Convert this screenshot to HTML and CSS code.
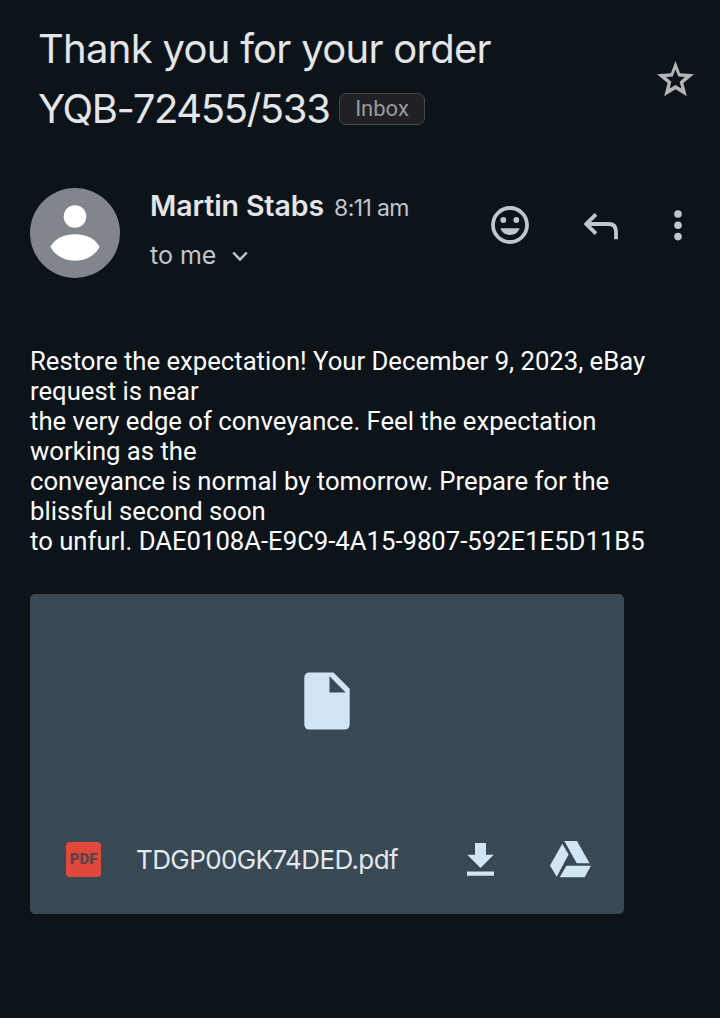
FILE: index.html
```html
<!DOCTYPE html>
<html lang="en">
<head>
<meta charset="utf-8">
<title>Thank you for your order</title>
<link rel="stylesheet" href="styles.css">
</head>
<body>
<main class="mail">
  <header class="subject">
    <h1 class="subject-title">
      <span class="title-first">Thank you for your order</span>
      <span class="title-row"><span class="title-second">YQB-72455/533</span><span class="chip">Inbox</span></span>
    </h1>
    <svg class="star" viewBox="0 0 37 36"><path fill-rule="evenodd" d="M18.500 0L23.100 12.200L37 13.300L26.400 22L29.800 35.200L18.500 28.200L7.200 35.200L10.600 22L0 13.300L13.900 12.200ZM18.500 8.500L15.700 15.400L9 16L14.300 20.700L12.700 27.600L18.500 24L24.300 27.600L22.700 20.700L28 16L21.300 15.400Z"/></svg>
  </header>
  <section class="sender">
    <svg class="avatar" viewBox="0 0 90 90"><circle class="avatar-bg" cx="45" cy="45" r="45"/><circle cx="45" cy="28.500" r="11.300"/><path d="M20.400 58.800C25.500 50 34 46.300 45 46.300S64.500 50 69.600 58.800C65 67.500 56 72.700 45 72.700S25 67.500 20.400 58.800Z"/></svg>
    <div class="sender-info">
      <div class="sender-line"><span class="name">Martin Stabs</span><span class="time">8:11 am</span></div>
      <div class="to-line"><span class="to">to me</span><svg class="chevron" viewBox="0 0 16 11"><path d="M1.200 1.500L8 8.500L14.800 1.500"/></svg></div>
    </div>
    <div class="actions">
      <svg class="smile" viewBox="0 0 38 38"><circle class="ring" cx="19" cy="19" r="17"/><circle cx="12.300" cy="14" r="2.900"/><circle cx="25.300" cy="14" r="2.900"/><path d="M9.300 22.300H28.700C27.300 26.500 23.500 29 19 29S10.700 26.500 9.300 22.300Z"/></svg>
      <svg class="reply" viewBox="0 0 34 27"><path d="M12 1.300L2.300 11L12 20.700M2.300 11H24.500Q32 11 32 18.500V26.300"/></svg>
      <svg class="more" viewBox="0 0 8 31"><circle cx="4" cy="4" r="3.800"/><circle cx="4" cy="15.300" r="3.800"/><circle cx="4" cy="26.600" r="3.800"/></svg>
    </div>
  </section>
  <p class="message">Restore the expectation! Your December 9, 2023, eBay<br>request is near<br>the very edge of conveyance. Feel the expectation<br>working as the<br>conveyance is normal by tomorrow. Prepare for the<br>blissful second soon<br>to unfurl. DAE0108A-E9C9-4A15-9807-592E1E5D11B5</p>
  <section class="attachment">
    <div class="preview"><svg class="doc" viewBox="0 0 46 58"><path fill-rule="evenodd" d="M5.500 .5H29.500L45.700 16.700V52Q45.700 57.500 40.200 57.500H5.500Q.3 57.500 .3 52V6Q.3 .5 5.500 .5ZM25.500 4.300V20.500H41.700Z"/></svg></div>
    <div class="file">
      <span class="pdf">PDF</span>
      <span class="filename">TDGP00GK74DED.pdf</span>
      <svg class="download" viewBox="0 0 27 33"><path d="M8 0H19V11.700H26.700L13.500 25L.3 11.700H8ZM0 28.500H27V32.700H0Z"/></svg>
      <svg class="drive" viewBox="0 0 41 37"><path d="M12.300 2.700L18.600 13.600L6.700 35.700L0 24.500ZM14.300 0H27L39.600 22.300H26.700ZM16.400 24.700H41L34.600 36.300H9.700Z"/></svg>
    </div>
  </section>
</main>
</body>
</html>
```
FILE: styles.css
```css
* { box-sizing: border-box; }
body { margin: 0; background: #0c141a; color: #e3e5e8; font-family: Inter, Roboto, sans-serif; }
svg { display: block; flex: none; }
.mail { height: 1018px; padding: 19px 30px 0; overflow: hidden; }
.subject { display: flex; justify-content: space-between; height: 120px; padding-left: 8px; margin-right: -4px; }
.subject-title { margin: 0; font-size: 40px; font-weight: 400; line-height: 60px; white-space: nowrap; }
.title-first { display: block; letter-spacing: -0.72px; }
.title-row { display: flex; align-items: center; }
.title-second { width: 301px; letter-spacing: -1.35px; }
.chip { width: 86px; height: 32px; border: 1px solid #45484b; border-radius: 7px; background: #202125; color: #989a9d; font: 22px/29px Roboto, sans-serif; text-align: center; }
.star { width: 37px; height: 36px; margin-top: 42px; fill: #b5b5b8; }
.sender { display: flex; margin-top: 49px; height: 90px; }
.avatar { width: 90px; height: 90px; fill: #fff; }
.avatar-bg { fill: #80868b; }
.sender-info { width: 300px; margin-left: 30px; white-space: nowrap; }
.sender-line { display: flex; align-items: baseline; height: 36px; line-height: 36px; }
.name { width: 184px; font-size: 28.5px; font-weight: 600; letter-spacing: -0.1px; }
.time { color: #c0c6cd; font-size: 23px; letter-spacing: -0.6px; }
.to-line { display: flex; align-items: center; height: 36px; margin-top: 13px; color: #c0c6cd; font-size: 25px; }
.to { width: 82px; letter-spacing: 0; }
.chevron { width: 16px; height: 11px; margin-top: 2px; fill: none; stroke: #c0c6cd; stroke-width: 2.4; }
.actions { display: flex; height: 38px; margin: 18px 0 0 41px; fill: #c0c6cd; }
.smile { width: 38px; height: 38px; }
.ring { fill: none; stroke: #c0c6cd; stroke-width: 3.8; }
.reply { width: 34px; height: 27px; margin: 7px 0 0 55px; fill: none; stroke: #c0c6cd; stroke-width: 3.8; }
.more { width: 8px; height: 31px; margin: 4px 0 0 56.4px; }
.message { margin: 68px 0 0; color: #fcfcfd; font: 25.68px/30px Roboto, sans-serif; white-space: nowrap; }
.attachment { width: 594px; height: 320px; margin-top: 38px; border-radius: 5px; background: #394954; }
.preview { display: flex; justify-content: center; height: 212px; padding-top: 78px; }
.doc { width: 46px; height: 58px; fill: #d2e5f4; }
.file { display: flex; align-items: center; height: 106px; padding-left: 36px; fill: #d2e5f4; }
.pdf { width: 35px; height: 35px; border-radius: 4px; background: #df483b; color: #5e4248; font: 900 15px/35px Roboto, sans-serif; text-align: center; }
.filename { flex: none; width: 366px; padding-left: 35px; color: #e1e8f0; font-size: 26px; letter-spacing: -0.6px; }
.download { width: 27px; height: 33px; }
.drive { width: 41px; height: 37px; margin-left: 56px; }
```
